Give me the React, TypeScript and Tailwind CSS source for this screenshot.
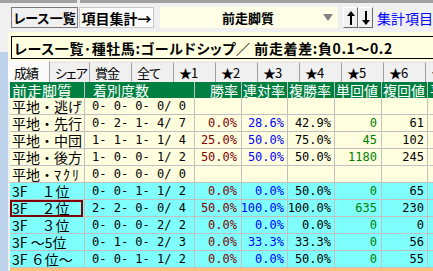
import React from 'react';

type Row = {
  label: React.ReactNode;
  counts: number[];
  win?: string;
  ren?: string;
  fuku?: string;
  tan?: string;
  fukuKai?: string;
  tone: 'cream' | 'cyan';
  selected?: boolean;
};

const rows: Row[] = [
  { label: '平地・逃げ', counts: [0, 0, 0, 0, 0], tone: 'cream' },
  { label: '平地・先行', counts: [0, 2, 1, 4, 7], win: '0.0%', ren: '28.6%', fuku: '42.9%', tan: '0', fukuKai: '61', tone: 'cream' },
  { label: '平地・中団', counts: [1, 1, 1, 1, 4], win: '25.0%', ren: '50.0%', fuku: '75.0%', tan: '45', fukuKai: '102', tone: 'cream' },
  { label: '平地・後方', counts: [1, 0, 0, 1, 2], win: '50.0%', ren: '50.0%', fuku: '50.0%', tan: '1180', fukuKai: '245', tone: 'cream' },
  { label: <>平地・<span className="tracking-[2px]">ﾏｸﾘ</span></>, counts: [0, 0, 0, 0, 0], tone: 'cream' },
  { label: '3F　１位', counts: [0, 0, 1, 1, 2], win: '0.0%', ren: '0.0%', fuku: '50.0%', tan: '0', fukuKai: '65', tone: 'cyan' },
  { label: '3F　２位', counts: [2, 2, 0, 0, 4], win: '50.0%', ren: '100.0%', fuku: '100.0%', tan: '635', fukuKai: '230', tone: 'cyan', selected: true },
  { label: '3F　３位', counts: [0, 0, 0, 2, 2], win: '0.0%', ren: '0.0%', fuku: '0.0%', tan: '0', fukuKai: '0', tone: 'cyan' },
  { label: '3F ～5位', counts: [0, 1, 0, 2, 3], win: '0.0%', ren: '33.3%', fuku: '33.3%', tan: '0', fukuKai: '56', tone: 'cyan' },
  { label: '3F ６位～', counts: [0, 0, 1, 1, 2], win: '0.0%', ren: '0.0%', fuku: '50.0%', tan: '0', fukuKai: '55', tone: 'cyan' },
];

const tabs = ['成績', 'シェア', '賞金', '全て', '★1', '★2', '★3', '★4', '★5', '★6', '★7'];

const mono = "font-['DejaVu_Sans_Mono',monospace] text-[12px] leading-none whitespace-pre";

const Cell = ({ w, children, className = '' }: { w: string; children?: React.ReactNode; className?: string }) => (
  <div className={`${w} shrink-0 h-full border-r border-[#c0c0c0] flex items-center ${className}`}>{children}</div>
);

const ArrowBtn = ({ up }: { up?: boolean }) => (
  <div className="w-[15px] h-full flex items-center justify-center bg-[#f0f0f0] border border-t-white border-l-white border-b-[#696969] border-r-[#696969]">
    <svg width="8" height="14" viewBox="0 0 8 14" className={up ? '' : 'rotate-180'}>
      <path d="M4 0 L0 5 L3 5 L3 14 L5 14 L5 5 L8 5 Z" fill="#000" />
    </svg>
  </div>
);

export default function App() {
  return (
    <div className="w-[433px] h-[271px] overflow-hidden bg-[#f0f0f0] font-['Noto_Sans_CJK_JP',sans-serif] text-black">
      <div className="flex h-[3px]">
        <div className="w-[77px] bg-[#a0a0a0]" />
        <div className="w-[3px] bg-[#e8e8e8]" />
        <div className="flex-1 bg-[#a0a0a0]" />
      </div>

      {/* toolbar */}
      <div className="mt-[4px] h-[21px] pl-[11px] flex items-stretch whitespace-nowrap">
        <div className="w-[70px] flex items-center justify-center bg-[#f0f0f0] border border-[#7a7a7a] text-[13px] font-bold leading-none [font-feature-settings:'palt']">
          レース一覧
        </div>
        <div className="ml-[1px] w-[78px] flex items-center justify-center bg-[#fcfcfc] border border-[#c8c8c8] text-[14px] font-bold leading-none">
          項目集計→
        </div>
        <div className="ml-[6px] w-[186px] relative flex items-center justify-center bg-[#ffffe8] text-[13px] font-bold leading-none">
          <span className="mr-[2px]">前走脚質</span>
          <svg width="10" height="7" viewBox="0 0 10 7" className="absolute right-[5px] top-[7px]">
            <path d="M0 0 L10 0 L5 7 Z" fill="#808080" />
          </svg>
        </div>
        <div className="ml-[5px] flex">
          <ArrowBtn up />
          <ArrowBtn />
        </div>
        <div className="ml-[4px] flex items-center text-[14px] text-[#0000ff] leading-none">集計項目</div>
      </div>

      <div className="mt-[4px] flex">
        {/* left splitter */}
        <div className="w-[8px] shrink-0 flex flex-col">
          <div className="h-[20px]" />
          <div className="h-[300px] bg-[#bcd2ea]" />
        </div>

        <div className="flex-1 min-w-0">
          {/* title panel */}
          <div className="bg-[#ffffe0] pt-[4px] pb-[2px] pl-[3px]">
            <div className="h-[23px] w-[440px] border border-black bg-[#ffffe0] flex items-center pl-[2px] text-[14px] font-bold leading-none whitespace-nowrap tracking-[0.6px] [font-feature-settings:'palt']">
              レース一覧･種牡馬:ゴールドシップ／ 前走着差:負0.1～0.2
            </div>
          </div>

          {/* tabs */}
          <div className="h-[21px] flex items-end whitespace-nowrap">
            {tabs.map((t, i) => (
              <div
                key={t}
                className={`${i === 1 ? 'w-[40px]' : 'w-[42px]'} shrink-0 ${i === 0 ? 'h-[21px] bg-[#fafafa] border-l border-t border-white' : 'h-[20px] border-t border-[#e4e4e4]'} border-r border-r-[#a0a0a0] flex items-center pl-[5px] text-[13px] leading-none tracking-[-1px] [font-feature-settings:'palt']`}
              >
                {t}
              </div>
            ))}
          </div>

          {/* table */}
          <div className="ml-[2px] w-[460px]">
            <div className="h-[16px] flex bg-[#008040] text-white text-[14px] leading-none whitespace-nowrap">
              <Cell w="w-[75px]" className="pl-[2px] text-[15px]">前走脚質</Cell>
              <Cell w="w-[110px]" className="pl-[8px]">着別度数</Cell>
              <Cell w="w-[47px]" className="justify-end pr-[3px]">勝率</Cell>
              <Cell w="w-[46px]" className="justify-end pr-[2px]">連対率</Cell>
              <Cell w="w-[47px]" className="justify-end pr-[3px]">複勝率</Cell>
              <Cell w="w-[47px]" className="justify-end pr-[3px]">単回値</Cell>
              <Cell w="w-[46px]" className="justify-end pr-[2px]">複回値</Cell>
              <Cell w="w-[60px]" className="pl-[2px]">平均人気</Cell>
            </div>

            {rows.map((r, i) => (
              <div
                key={i}
                className={`h-[17px] flex border-b border-[#c0c0c0] ${r.tone === 'cream' ? 'bg-[#ffffe0]' : 'bg-[#80ffff]'}`}
              >
                <Cell w="w-[75px]" className="relative pl-[2px] text-[14px] leading-none whitespace-nowrap">
                  {r.label}
                  {r.selected && <div className="absolute left-0 top-[0px] right-[1px] bottom-[-1px] border-2 border-[#800000]" />}
                </Cell>
                <Cell w="w-[110px]" className={`pl-[7px] ${mono}`}>
                  {`${r.counts[0]}- ${r.counts[1]}- ${r.counts[2]}- ${r.counts[3]}/ ${r.counts[4]}`}
                </Cell>
                <Cell w="w-[47px]" className={`justify-end pr-[4px] text-[#800000] ${mono}`}>{r.win}</Cell>
                <Cell w="w-[46px]" className={`justify-end pr-[3px] text-[#0000ff] ${mono}`}>{r.ren}</Cell>
                <Cell w="w-[47px]" className={`justify-end pr-[3px] ${mono}`}>{r.fuku}</Cell>
                <Cell w="w-[47px]" className={`justify-end pr-[4px] text-[#008000] ${mono}`}>{r.tan}</Cell>
                <Cell w="w-[46px]" className={`justify-end pr-[3px] ${mono}`}>{r.fukuKai}</Cell>
                <Cell w="w-[60px]" />
              </div>
            ))}
            <div className="h-[17px] flex bg-[#ffc080]" />
          </div>
        </div>
      </div>
    </div>
  );
}
